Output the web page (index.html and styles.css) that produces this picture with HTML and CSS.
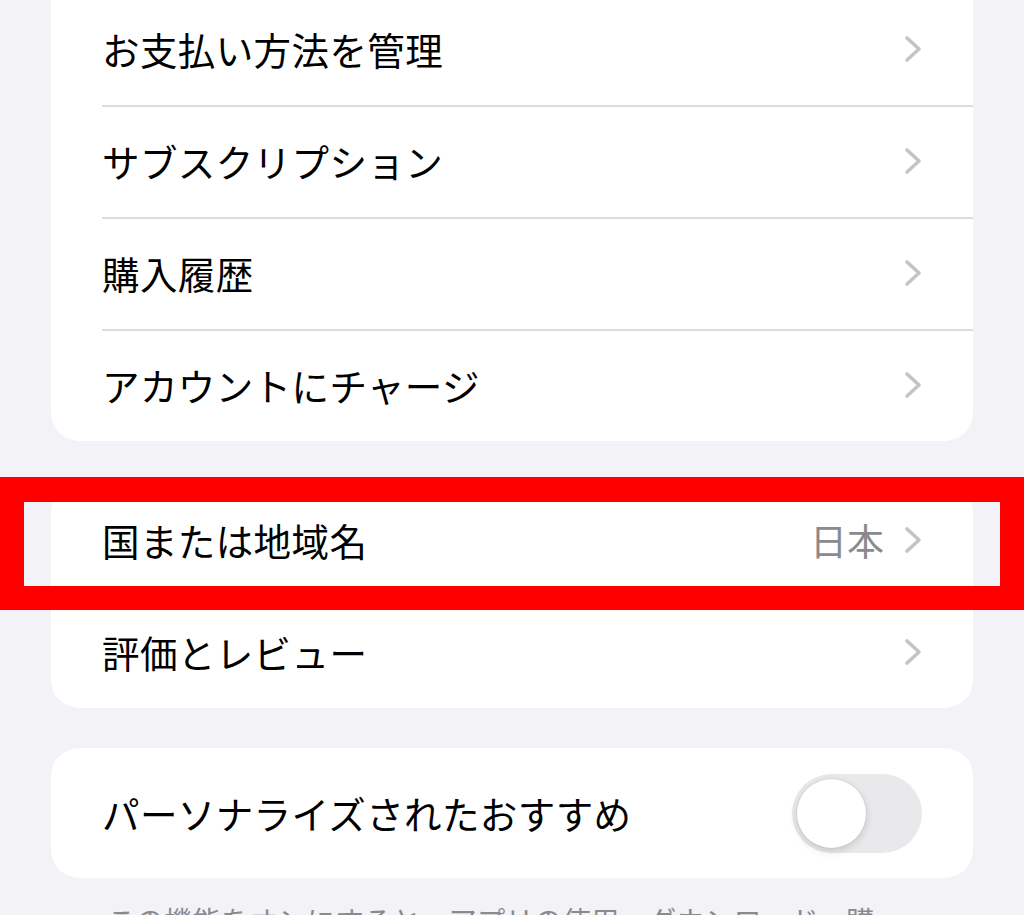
FILE: index.html
```html
<!DOCTYPE html>
<html lang="ja">
<head>
<meta charset="utf-8">
<title>設定</title>
<link rel="stylesheet" href="styles.css">
</head>
<body>
<div class="page">
  <div class="card card-top">
    <div class="row">
      <span class="label">お支払い方法を管理</span>
      <span class="trail"><svg class="chev" viewBox="0 0 18 28"><path d="M3 3 L15 14 L3 25"/></svg></span>
    </div>
    <div class="row">
      <span class="label">サブスクリプション</span>
      <span class="trail"><svg class="chev" viewBox="0 0 18 28"><path d="M3 3 L15 14 L3 25"/></svg></span>
    </div>
    <div class="row">
      <span class="label">購入履歴</span>
      <span class="trail"><svg class="chev" viewBox="0 0 18 28"><path d="M3 3 L15 14 L3 25"/></svg></span>
    </div>
    <div class="row">
      <span class="label">アカウントにチャージ</span>
      <span class="trail"><svg class="chev" viewBox="0 0 18 28"><path d="M3 3 L15 14 L3 25"/></svg></span>
    </div>
  </div>

  <div class="card">
    <div class="row">
      <span class="label">国または地域名</span>
      <span class="trail"><span class="value">日本</span><svg class="chev" viewBox="0 0 18 28"><path d="M3 3 L15 14 L3 25"/></svg></span>
    </div>
    <div class="row">
      <span class="label">評価とレビュー</span>
      <span class="trail"><svg class="chev" viewBox="0 0 18 28"><path d="M3 3 L15 14 L3 25"/></svg></span>
    </div>
  </div>

  <div class="card">
    <div class="row row-toggle">
      <span class="label">パーソナライズされたおすすめ</span>
      <span class="toggle"><span class="knob"></span></span>
    </div>
  </div>

  <p class="footer">この機能をオンにすると、アプリの使用、ダウンロード、購入履歴などに基づいておすすめが表示されます。</p>
</div>
<div class="highlight"></div>
</body>
</html>
```

FILE: styles.css
```css
html, body {
  margin: 0;
  padding: 0;
}

body {
  background: #f2f2f7;
  font-family: "Noto Sans CJK JP", "Noto Sans", sans-serif;
  color: #000;
  width: 1024px;
  height: 915px;
  overflow: hidden;
  position: relative;
}

.page {
  padding: 0 51px;
  display: flex;
  flex-direction: column;
}

.card {
  background: #fff;
  border-radius: 28px;
  overflow: hidden;
  margin-top: 43px;
}

.card-top {
  margin-top: -7px;
  border-radius: 0 0 28px 28px;
}

.row {
  height: 112px;
  display: flex;
  align-items: center;
  justify-content: space-between;
  padding: 0 51px 0 51px;
  position: relative;
  box-sizing: border-box;
}

.row + .row::before {
  content: "";
  position: absolute;
  left: 51px;
  right: 0;
  top: 0;
  height: 1.5px;
  background: #dcdcdf;
}

.label {
  font-size: 37.5px;
  line-height: 1;
  letter-spacing: 0.4px;
}

.trail {
  display: flex;
  align-items: center;
  gap: 20px;
}

.value {
  font-size: 37px;
  line-height: 1;
  color: #8a8a8e;
}

.chev {
  width: 18px;
  height: 28px;
  fill: none;
  stroke: #c4c4c7;
  stroke-width: 3.6;
  stroke-linecap: round;
  stroke-linejoin: round;
}

.card + .card {
  margin-top: 40px;
}

.card:nth-child(2) {
  margin-top: 43px;
}

.row-toggle {
  height: 130px;
}

.toggle {
  width: 130px;
  height: 79px;
  border-radius: 40px;
  background: #e9e9eb;
  display: flex;
  align-items: center;
  padding: 0 5px;
  box-sizing: border-box;
}

.knob {
  width: 69px;
  height: 69px;
  border-radius: 50%;
  background: #fff;
  box-shadow: 0 3px 8px rgba(0, 0, 0, 0.15), 0 0 0 1px rgba(0, 0, 0, 0.04);
}

.footer {
  margin: 22px 0 0 0;
  padding: 0 92px 0 56px;
  font-size: 28.5px;
  line-height: 1.4;
  color: #8a8a8e;
}

.highlight {
  position: absolute;
  left: 0;
  top: 477px;
  width: 1024px;
  height: 133px;
  border: 24px solid #ff0000;
  border-top-width: 25px;
  box-sizing: border-box;
}
```
